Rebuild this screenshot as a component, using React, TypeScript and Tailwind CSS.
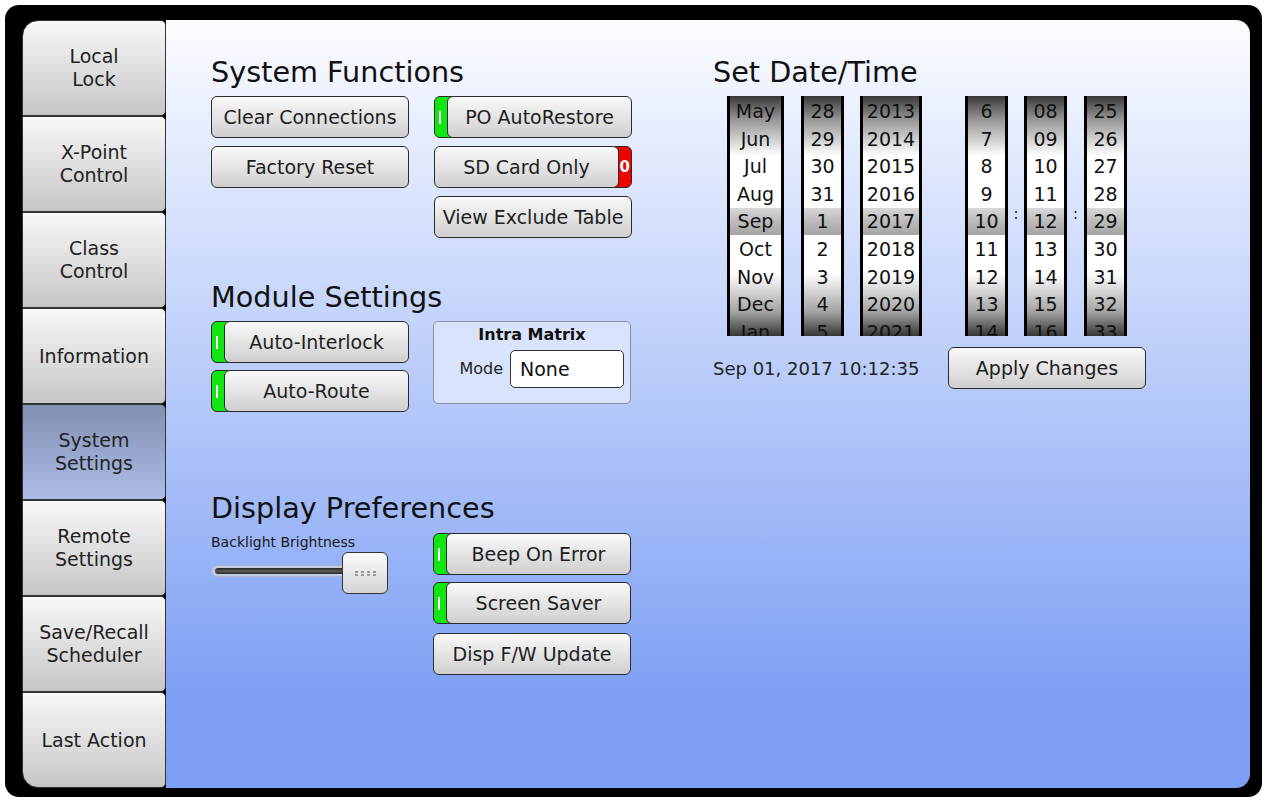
import React from "react";

// Pantalla de ajustes del sistema (panel táctil)
const NAV = [
  "Local\nLock",
  "X-Point\nControl",
  "Class\nControl",
  "Information",
  "System\nSettings",
  "Remote\nSettings",
  "Save/Recall\nScheduler",
  "Last Action",
];

const MONTHS = ["May", "Jun", "Jul", "Aug", "Sep", "Oct", "Nov", "Dec", "Jan"];
const DAYS = ["28", "29", "30", "31", "1", "2", "3", "4", "5"];
const YEARS = ["2013", "2014", "2015", "2016", "2017", "2018", "2019", "2020", "2021"];
const HOURS = ["6", "7", "8", "9", "10", "11", "12", "13", "14"];
const MINS = ["08", "09", "10", "11", "12", "13", "14", "15", "16"];
const SECS = ["25", "26", "27", "28", "29", "30", "31", "32", "33"];

const H2 = "text-[28.7px] leading-[32px] h-[32px] text-[#111]";

function Btn({
  label,
  toggle,
  className = "w-[198px]",
}: {
  label: string;
  toggle?: "on" | "off";
  className?: string;
}) {
  return (
    <div className={`${className} h-[42px] flex shrink-0`}>
      {toggle === "on" && (
        <div className="w-[18px] -mr-[5px] h-full rounded-l-[6px] border border-[#2b2b2b] bg-[#12e612] flex items-center pl-[4px]">
          <div className="w-[2px] h-[13px] bg-white" />
        </div>
      )}
      <div className="relative z-10 flex-1 h-full flex items-center justify-center rounded-[6px] border border-[#2b2b2b] bg-[linear-gradient(to_bottom,#f9f9f9,#cfcfcf)] text-[19px] text-[#1e1e1e] whitespace-nowrap">
        {label}
      </div>
      {toggle === "off" && (
        <div className="w-[18px] -ml-[5px] h-full rounded-r-[6px] border border-[#2b2b2b] bg-[#f00000] flex items-center justify-end pr-[1px] text-white text-[15px] leading-[15px] font-bold">
          0
        </div>
      )}
    </div>
  );
}

function Drum({ items, w }: { items: string[]; w: string }) {
  return (
    <div
      className={`${w} h-[240px] shrink-0 overflow-hidden border-x-[3px] border-black bg-[linear-gradient(to_bottom,#383838_0%,#989898_10%,#ffffff_25%,#ffffff_74%,#a2a2a2_90%,#363636_100%)] flex flex-col pt-[1.5px] text-[#111]`}
    >
      {items.map((t, i) => (
        <div
          key={t + i}
          className={`h-[27.6px] shrink-0 flex items-center justify-center text-[19px] ${
            i === 4
              ? "bg-[linear-gradient(to_bottom,#d8d8d8,#bdbdbd_45%,#a4a4a4)]"
              : ""
          }`}
        >
          {t}
        </div>
      ))}
    </div>
  );
}

function Colon({ w }: { w: string }) {
  return (
    <div className={`${w} shrink-0 flex justify-center pt-[111px] text-[15px] leading-[15px] text-[#222]`}>
      :
    </div>
  );
}

export default function App() {
  return (
    <div className="w-[1265px] h-[800px] bg-white font-['DejaVu_Sans',sans-serif] text-[#1a1a1a]">
      <div className="ml-[5px] mt-[5px] w-[1257px] h-[792px] rounded-[14px] bg-black pl-[17px] pt-[15px] pr-[12px] flex">
        {/* Menú lateral */}
        <div className="w-[144px] h-[768px] flex flex-col shrink-0">
          {NAV.map((n, i) => (
            <div
              key={n}
              className={`h-[96px] shrink-0 border border-[#333] rounded-r-[5px] flex items-center justify-center text-center text-[19px] leading-[23px] text-[#222] whitespace-pre-line ${
                i === 0 ? "rounded-tl-[16px]" : ""
              } ${i === NAV.length - 1 ? "rounded-bl-[16px]" : ""} ${
                i === 4
                  ? "bg-[linear-gradient(to_bottom,#8290b1,#acbce7)]"
                  : "bg-[linear-gradient(to_bottom,#f8f8f8,#c6c6c6)]"
              }`}
            >
              {n}
            </div>
          ))}
        </div>

        {/* Contenido */}
        <div className="flex-1 h-[768px] rounded-r-[14px] bg-[linear-gradient(to_bottom,#fbfcff_0%,#7ea0f4_88%,#7ea0f4_100%)] pl-[45px] pt-[36px] flex">
          <div className="w-[420px] shrink-0 flex flex-col">
            <h2 className={H2}>System Functions</h2>
            <div className="mt-[8px] flex gap-[25px]">
              <div className="w-[198px] flex flex-col gap-[8px]">
                <Btn label="Clear Connections" />
                <Btn label="Factory Reset" />
              </div>
              <div className="w-[198px] flex flex-col gap-[8px]">
                <Btn label="PO AutoRestore" toggle="on" />
                <Btn label="SD Card Only" toggle="off" />
                <Btn label="View Exclude Table" />
              </div>
            </div>

            <h2 className={`mt-[43px] ${H2}`}>Module Settings</h2>
            <div className="mt-[8px] flex gap-[24px]">
              <div className="w-[198px] flex flex-col gap-[7px]">
                <Btn label="Auto-Interlock" toggle="on" />
                <Btn label="Auto-Route" toggle="on" />
              </div>
              <div className="w-[198px] h-[83px] rounded-[5px] border border-[#8a90a4] bg-[#d9e3fb] pt-[3px]">
                <div className="text-center text-[16px] leading-[20px] font-bold text-[#111]">Intra Matrix</div>
                <div className="mt-[5px] flex items-center justify-end gap-[7px] pr-[6px]">
                  <span className="text-[16px] text-[#222]">Mode</span>
                  <div className="w-[114px] h-[38px] rounded-[5px] border border-[#333] bg-white flex items-center pl-[9px] text-[19px] text-[#111]">
                    None
                  </div>
                </div>
              </div>
            </div>

            <h2 className={`mt-[80px] ${H2}`}>Display Preferences</h2>
            <div className="mt-[9px] flex gap-[25px]">
              <div className="w-[198px] flex flex-col">
                <div className="pt-[1px] text-[14px] leading-[16px] text-[#1a1a1a]">Backlight Brightness</div>
                <div className="relative mt-[2px] h-[44px] w-[177px]">
                  <div className="absolute left-0 top-[13px] w-[140px] h-[12px] rounded-full bg-[#c3cbe0] border border-[#aab4cc]">
                    <div className="mt-[2px] mx-[3px] h-[6px] rounded-full bg-[linear-gradient(to_bottom,#222,#5a5a5a_50%,#2a2a2a)]" />
                  </div>
                  <div className="absolute left-[131px] top-0 w-[46px] h-[42px] rounded-[6px] border border-[#333] bg-[linear-gradient(to_bottom,#fbfbfb,#d4d4d4)] flex flex-col items-center justify-center gap-[1px]">
                    {[0, 1].map((r) => (
                      <div key={r} className="flex gap-[3px]">
                        {[0, 1, 2, 3].map((c) => (
                          <div key={c} className="w-[3px] h-[2px] bg-[#9a9a9a]" />
                        ))}
                      </div>
                    ))}
                  </div>
                </div>
              </div>
              <div className="w-[198px] flex flex-col">
                <Btn label="Beep On Error" toggle="on" />
                <div className="mt-[7px]">
                  <Btn label="Screen Saver" toggle="on" />
                </div>
                <div className="mt-[9px]">
                  <Btn label="Disp F/W Update" />
                </div>
              </div>
            </div>
          </div>

          <div className="ml-[82px] w-[440px] shrink-0 flex flex-col">
            <h2 className={H2}>Set Date/Time</h2>
            <div className="mt-[8px] flex h-[240px]">
              <div className="w-[14px] shrink-0" />
              <Drum items={MONTHS} w="w-[57px]" />
              <div className="w-[17px] shrink-0" />
              <Drum items={DAYS} w="w-[43px]" />
              <div className="w-[16px] shrink-0" />
              <Drum items={YEARS} w="w-[62px]" />
              <div className="w-[43px] shrink-0" />
              <Drum items={HOURS} w="w-[43px]" />
              <Colon w="w-[16px]" />
              <Drum items={MINS} w="w-[43px]" />
              <Colon w="w-[17px]" />
              <Drum items={SECS} w="w-[43px]" />
            </div>
            <div className="mt-[11px] flex items-center">
              <div className="w-[235px] text-[18px] text-[#222]">Sep 01, 2017 10:12:35</div>
              <Btn label="Apply Changes" />
            </div>
          </div>
        </div>
      </div>
    </div>
  );
}
